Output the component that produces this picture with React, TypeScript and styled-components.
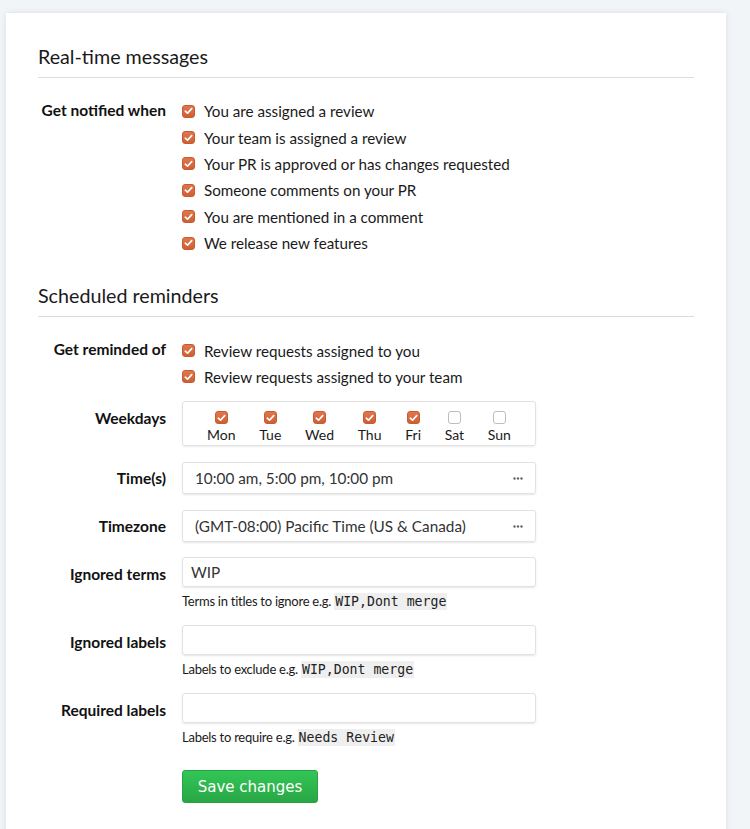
import React from "react";
import styled, { createGlobalStyle } from "styled-components";

const Global = createGlobalStyle`
  html, body { margin: 0; padding: 0; background: #f2f5f8; }
  body { font-family: Lato, "Open Sans", sans-serif; color: #1e1e1e; }
  * { box-sizing: border-box; }
`;

const Page = styled.div`
  padding: 13px 24px 0 6px;
  min-height: 829px;
`;

const Card = styled.div`
  width: 720px;
  background: #fff;
  box-shadow: 0 0 6px rgba(30, 50, 80, 0.12);
  padding: 32px 32px 26px;
`;

const SectionTitle = styled.h2<{ $first?: boolean }>`
  margin: ${(p) => (p.$first ? "0" : "28px")} 0 0;
  font-size: 19.7px;
  line-height: 24px;
  font-weight: 400;
  color: #1a1a1a;
  padding-bottom: 8px;
  border-bottom: 1px solid #dcdcdc;
`;

const Fields = styled.div`
  display: flex;
  flex-direction: column;
  margin-top: 20px;
`;

const Row = styled.div<{ $mb?: number; $center?: boolean }>`
  display: grid;
  grid-template-columns: 128px 354px;
  column-gap: 16px;
  align-items: ${(p) => (p.$center ? "center" : "start")};
  margin-bottom: ${(p) => p.$mb ?? 16}px;
`;

const Label = styled.div<{ $pt?: number }>`
  text-align: right;
  font-weight: 700;
  font-size: 15.5px;
  line-height: 20px;
  padding-top: ${(p) => p.$pt ?? 0}px;
  color: #111;
  white-space: nowrap;
`;

const CheckList = styled.div`
  display: flex;
  flex-direction: column;
  width: 400px;
`;

const CheckItem = styled.label`
  display: flex;
  align-items: center;
  gap: 9px;
  height: 26.4px;
  font-size: 15.2px;
  color: #1a1a1a;
  white-space: nowrap;
`;

const Box = styled.span<{ $on: boolean }>`
  width: 13px;
  height: 13px;
  border-radius: 3px;
  flex: none;
  display: inline-flex;
  align-items: center;
  justify-content: center;
  background: ${(p) => (p.$on ? "linear-gradient(#e0764c, #cf5f35)" : "#fff")};
  border: 1px solid ${(p) => (p.$on ? "#c95a30" : "#bdbdbd")};
`;

const Check = ({ on }: { on: boolean }) => (
  <Box $on={on}>
    {on && (
      <svg width="9" height="8" viewBox="0 0 9 8">
        <path d="M1.3 4.2 L3.5 6.2 L7.7 1.6" fill="none" stroke="#fff" strokeWidth="1.7" strokeLinecap="round" strokeLinejoin="round" />
      </svg>
    )}
  </Box>
);

const DaysBox = styled.div`
  display: flex;
  justify-content: space-between;
  padding: 9px 24px 4px;
  height: 45px;
  border: 1px solid #e2e2e2;
  border-radius: 3px;
  box-shadow: 0 1px 2px rgba(0, 0, 0, 0.08);
`;

const Day = styled.label`
  display: flex;
  flex-direction: column;
  align-items: center;
  gap: 3px;
  font-size: 14px;
  line-height: 16px;
  color: #1a1a1a;
`;

const Select = styled.div`
  display: flex;
  align-items: center;
  justify-content: space-between;
  height: 32px;
  padding: 0 12px 0 12px;
  border: 1px solid #e2e2e2;
  border-radius: 3px;
  box-shadow: 0 1px 2px rgba(0, 0, 0, 0.1);
  font-size: 15.3px;
  color: #333;
`;

const Dots = () => (
  <svg width="10" height="3" viewBox="0 0 10 3">
    <circle cx="1.5" cy="1.5" r="1.2" fill="#666" />
    <circle cx="5" cy="1.5" r="1.2" fill="#666" />
    <circle cx="8.5" cy="1.5" r="1.2" fill="#666" />
  </svg>
);

const InputBox = styled.div`
  height: 30px;
  display: flex;
  align-items: center;
  padding: 0 8px;
  border: 1px solid #e2e2e2;
  border-radius: 3px;
  box-shadow: 0 1px 2px rgba(0, 0, 0, 0.1);
  font-size: 15.3px;
  color: #333;
`;

const Help = styled.div`
  margin-top: 7px;
  font-size: 13px;
  letter-spacing: -0.25px;
  line-height: 15px;
  color: #1a1a1a;
  white-space: nowrap;
`;

const Code = styled.code`
  font-family: "DejaVu Sans Mono", monospace;
  font-size: 13.2px;
  letter-spacing: 0;
  background: #efefef;
  padding: 1px 1px;
  color: #222;
`;

const Button = styled.button`
  height: 33px;
  width: 136px;
  border: 1px solid #25a244;
  border-radius: 3px;
  background: linear-gradient(#33c656, #28a745);
  color: #fff;
  font-family: "DejaVu Sans", sans-serif;
  font-size: 15px;
  padding: 0;
`;

const notify = [
  "You are assigned a review",
  "Your team is assigned a review",
  "Your PR is approved or has changes requested",
  "Someone comments on your PR",
  "You are mentioned in a comment",
  "We release new features",
];

const days = [
  ["Mon", true],
  ["Tue", true],
  ["Wed", true],
  ["Thu", true],
  ["Fri", true],
  ["Sat", false],
  ["Sun", false],
] as const;

export default function App() {
  return (
    <>
      <Global />
      <Page>
        <Card>
          <SectionTitle $first>Real-time messages</SectionTitle>
          <Fields>
            <Row $mb={0}>
              <Label $pt={2}>Get notified when</Label>
              <CheckList>
                {notify.map((t) => (
                  <CheckItem key={t}>
                    <Check on />
                    {t}
                  </CheckItem>
                ))}
              </CheckList>
            </Row>
          </Fields>
          <SectionTitle>Scheduled reminders</SectionTitle>
          <Fields>
            <Row $mb={11}>
              <Label $pt={2}>Get reminded of</Label>
              <CheckList>
                <CheckItem>
                  <Check on />
                  Review requests assigned to you
                </CheckItem>
                <CheckItem>
                  <Check on />
                  Review requests assigned to your team
                </CheckItem>
              </CheckList>
            </Row>
            <Row>
              <Label $pt={7}>Weekdays</Label>
              <DaysBox>
                {days.map(([d, on]) => (
                  <Day key={d}>
                    <Check on={on} />
                    {d}
                  </Day>
                ))}
              </DaysBox>
            </Row>
            <Row $center>
              <Label>Time(s)</Label>
              <Select>
                10:00 am, 5:00 pm, 10:00 pm
                <Dots />
              </Select>
            </Row>
            <Row $center $mb={15}>
              <Label>Timezone</Label>
              <Select>
                (GMT-08:00) Pacific Time (US &amp; Canada)
                <Dots />
              </Select>
            </Row>
            <Row>
              <Label $pt={7}>Ignored terms</Label>
              <div>
                <InputBox>WIP</InputBox>
                <Help>
                  Terms in titles to ignore e.g. <Code>WIP,Dont merge</Code>
                </Help>
              </div>
            </Row>
            <Row>
              <Label $pt={7}>Ignored labels</Label>
              <div>
                <InputBox />
                <Help>
                  Labels to exclude e.g. <Code>WIP,Dont merge</Code>
                </Help>
              </div>
            </Row>
            <Row $mb={25}>
              <Label $pt={7}>Required labels</Label>
              <div>
                <InputBox />
                <Help>
                  Labels to require e.g. <Code>Needs Review</Code>
                </Help>
              </div>
            </Row>
            <Row>
              <span />
              <div>
                <Button>Save changes</Button>
              </div>
            </Row>
          </Fields>
        </Card>
      </Page>
    </>
  );
}
